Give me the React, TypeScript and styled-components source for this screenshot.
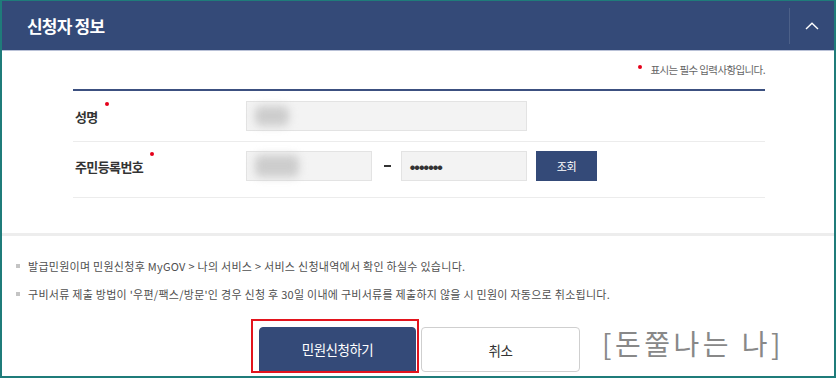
import React from "react";
import styled, { createGlobalStyle } from "styled-components";

const Global = createGlobalStyle`
  html, body { margin: 0; padding: 0; background: #fff; }
  body { font-family: "Noto Sans CJK KR", "Noto Sans", sans-serif; }
  * { box-sizing: border-box; }
`;

const Frame = styled.div`
  position: relative;
  width: 836px;
  height: 378px;
  border: 2px solid #1f7c7a;
  border-top-width: 1px;
  overflow: hidden;
  display: flex;
  flex-direction: column;
  background: #fff;
`;

const Header = styled.div`
  height: 50px;
  flex: none;
  background: #344a78;
  border-bottom: 1px solid #b9c1d7;
  display: flex;
  align-items: center;
  padding-left: 25px;
`;

const Title = styled.h2`
  flex: 1;
  margin: 0;
  color: #fff;
  font-size: 17px;
  font-weight: 700;
  letter-spacing: -0.8px;
  line-height: 1;
`;

const Toggle = styled.div`
  width: 45px;
  height: 36px;
  border-left: 1px solid rgba(255, 255, 255, 0.12);
  display: flex;
  align-items: center;
  justify-content: center;
`;

const Content = styled.div`
  padding: 0 69px 0 71px;
`;

const Note = styled.p`
  margin: 10px 0 0;
  height: 18px;
  text-align: right;
  font-size: 10.5px;
  color: #666;
  letter-spacing: -0.6px;
  line-height: 18px;
`;

const NoteDot = styled.span`
  display: inline-block;
  width: 4px;
  height: 4px;
  border-radius: 50%;
  background: #e5001a;
  vertical-align: top;
  margin: 4px 8px 0 0;
`;

const Table = styled.div`
  margin-top: 10px;
  border-top: 2px solid #3c5080;
`;

const Row = styled.div<{ $tall?: boolean }>`
  display: grid;
  grid-template-columns: 173px 1fr;
  align-items: center;
  padding: ${(p) => (p.$tall ? "9px 0 16px" : "10px 0 10px")};
  border-bottom: 1px solid #ececec;
`;

const Label = styled.div`
  font-size: 13px;
  font-weight: 700;
  color: #333;
  letter-spacing: -0.6px;
  padding-left: 2px;
`;

const Required = styled.span`
  display: inline-block;
  width: 4px;
  height: 4px;
  border-radius: 50%;
  background: #e5001a;
  vertical-align: top;
  margin: -5px 0 0 7px;
`;

const Fields = styled.div`
  display: flex;
  align-items: center;
`;

const Field = styled.div<{ $w: number }>`
  width: ${(p) => p.$w}px;
  height: 30px;
  background: #f3f3f3;
  border: 1px solid #e3e3e3;
  display: flex;
  align-items: center;
  padding-left: 8px;
`;

const Blur = styled.span<{ $w: number; $h: number }>`
  display: block;
  width: ${(p) => p.$w}px;
  height: ${(p) => p.$h}px;
  background: #cdcdcd;
  border-radius: 6px;
  filter: blur(4px);
`;

const Masked = styled.span`
  font-size: 5px;
  color: #333;
  letter-spacing: -0.4px;
  line-height: 1;
`;

const Dash = styled.span`
  width: 7px;
  height: 2px;
  background: #333;
  margin: 0 10px 0 12px;
`;

const LookupButton = styled.button`
  margin-left: 9px;
  width: 61px;
  height: 30px;
  border: none;
  background: #344a78;
  color: #fff;
  font-family: inherit;
  font-size: 11px;
  letter-spacing: -0.4px;
  padding: 0;
`;

const Separator = styled.div`
  margin-top: 35px;
  height: 3px;
  background: #ededed;
`;

const InfoList = styled.ul`
  list-style: none;
  margin: 22px 0 0;
  padding: 0 0 0 14px;
  display: flex;
  flex-direction: column;
  gap: 12px;
`;

const InfoItem = styled.li`
  display: flex;
  align-items: center;
  font-size: 11px;
  line-height: 16px;
  color: #505050;
  letter-spacing: 0.27px;
  &::before {
    content: "";
    width: 4px;
    height: 4px;
    background: #c4c4c4;
    margin-right: 8px;
    flex: none;
  }
`;

const Actions = styled.div`
  margin-top: 17px;
  display: flex;
  justify-content: center;
  align-items: flex-start;
  gap: 2px;
  padding-right: 5px;
`;

const Highlight = styled.div`
  width: 168px;
  height: 54px;
  border: 2px solid #e3141d;
  padding: 6px 1px 0 6px;
  overflow: hidden;
`;

const ActionButton = styled.button<{ $primary?: boolean }>`
  height: ${(p) => (p.$primary ? "52px" : "45px")};
  width: ${(p) => (p.$primary ? "157px" : "159px")};
  margin-top: ${(p) => (p.$primary ? "0" : "8px")};
  border-radius: 4px;
  border: 1px solid ${(p) => (p.$primary ? "#344a78" : "#cfcfcf")};
  background: ${(p) => (p.$primary ? "#344a78" : "#fff")};
  color: ${(p) => (p.$primary ? "#fff" : "#333")};
  font-family: inherit;
  font-size: 13.5px;
  letter-spacing: -0.5px;
  padding: ${(p) => (p.$primary ? "0 0 8px" : "0")};
`;

const Watermark = styled.div`
  position: absolute;
  left: 600px;
  top: 324px;
  font-size: 28px;
  color: #888;
  letter-spacing: 3.5px;
  line-height: 36px;
`;

export default function App() {
  return (
    <>
      <Global />
      <Frame>
        <Header>
          <Title>신청자 정보</Title>
          <Toggle>
            <svg width="14" height="8" viewBox="0 0 14 8" fill="none">
              <path d="M1 7L7 1.2L13 7" stroke="#fff" strokeWidth="1.4" />
            </svg>
          </Toggle>
        </Header>
        <Content>
          <Note>
            <NoteDot />
            표시는 필수 입력사항입니다.
          </Note>
          <Table>
            <Row>
              <Label>
                성명
                <Required />
              </Label>
              <Fields>
                <Field $w={281}>
                  <Blur $w={34} $h={20} />
                </Field>
              </Fields>
            </Row>
            <Row $tall>
              <Label>
                주민등록번호
                <Required />
              </Label>
              <Fields>
                <Field $w={126}>
                  <Blur $w={44} $h={22} />
                </Field>
                <Dash />
                <Field $w={126}>
                  <Masked>●●●●●●●</Masked>
                </Field>
                <LookupButton>조회</LookupButton>
              </Fields>
            </Row>
          </Table>
        </Content>
        <Separator />
        <InfoList>
          <InfoItem>
            발급민원이며 민원신청후 MyGOV &gt; 나의 서비스 &gt; 서비스 신청내역에서 확인 하실수 있습니다.
          </InfoItem>
          <InfoItem>
            구비서류 제출 방법이 '우편/팩스/방문'인 경우 신청 후 30일 이내에 구비서류를 제출하지 않을 시 민원이 자동으로 취소됩니다.
          </InfoItem>
        </InfoList>
        <Actions>
          <Highlight>
            <ActionButton $primary>민원신청하기</ActionButton>
          </Highlight>
          <ActionButton>취소</ActionButton>
        </Actions>
        <Watermark>[돈쭐나는 나]</Watermark>
      </Frame>
    </>
  );
}
